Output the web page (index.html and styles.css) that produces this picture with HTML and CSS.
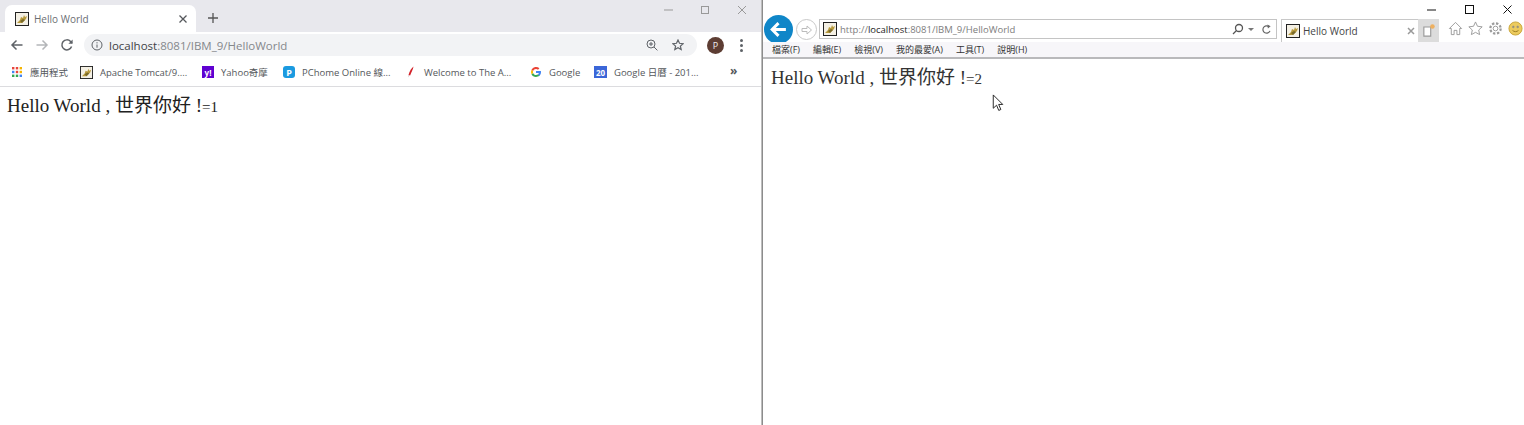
FILE: index.html
```html
<!DOCTYPE html>
<html lang="zh-Hant">
<head>
  <meta charset="UTF-8">
  <title>Hello World</title>
  <link rel="stylesheet" href="styles.css">
</head>
<body>
  <svg class="sprite" width="0" height="0">
    <symbol id="cat" viewBox="0 0 14 14">
      <rect x=".5" y=".5" width="13" height="13" fill="#f4f0e4" stroke="#222"/>
      <path d="M2 11 5 8l1-3 2 1 1-3 1 2 2-1-1 3-2 2-2 2H2z" fill="#b89a3c"/>
      <path d="M5 9l3-2 2 1-3 3z" fill="#7a6a2a"/>
    </symbol>
  </svg>

  <div class="screen">
    <!-- Chrome -->
    <section class="chrome">
      <div class="ch-titlebar">
        <div class="ch-tab">
          <svg class="fav"><use href="#cat"/></svg>
          <span class="ch-tab-title">Hello World</span>
          <svg class="ch-tab-x" viewBox="0 0 10 10"><path d="M1.5 1.5l7 7M8.5 1.5l-7 7"/></svg>
        </div>
        <svg class="ch-newtab" viewBox="0 0 12 12"><path d="M6 1v10M1 6h10"/></svg>
        <div class="ch-winbtns">
          <svg viewBox="0 0 10 10"><path d="M1 5h9"/></svg>
          <svg viewBox="0 0 10 10"><rect x="1.5" y="1.5" width="7" height="7"/></svg>
          <svg viewBox="0 0 10 10"><path d="M1 1l8 8M9 1l-8 8"/></svg>
        </div>
      </div>
      <div class="ch-toolbar">
        <svg class="ch-nav" viewBox="0 0 14 14"><path d="M12.5 7H2M6.5 2.5 2 7l4.5 4.5"/></svg>
        <svg class="ch-nav ch-nav-off" viewBox="0 0 14 14"><path d="M1.5 7H12M7.5 2.5 12 7l-4.5 4.5"/></svg>
        <svg class="ch-nav" viewBox="0 0 14 14"><path d="M11.6 8.6A5 5 0 1 1 10.6 3.5L12 5"/><path class="solid" d="M12.6 1.6v4.2H8.4z"/></svg>
        <div class="ch-omnibox">
          <svg class="ch-info" viewBox="0 0 12 12"><circle cx="6" cy="6" r="5"/><path d="M6 5.5v3.2M6 3.2v1.2"/></svg>
          <span class="ch-url"><b>localhost</b>:8081/IBM_9/HelloWorld</span>
          <svg class="ch-zoom" viewBox="0 0 12 12"><circle cx="5" cy="5" r="4"/><path d="M8 8l3.4 3.4M3 5h4M5 3v4"/></svg>
          <svg class="ch-star" viewBox="0 0 12 12"><path d="M6 1l1.5 3.3 3.6.4-2.7 2.4.8 3.5L6 8.8l-3.2 1.8.8-3.5L.9 4.7l3.6-.4z"/></svg>
        </div>
        <span class="ch-avatar">P</span>
        <span class="ch-menu"><i></i><i></i><i></i></span>
      </div>
      <div class="ch-bookmarks">
        <a class="bm bm-apps">
          <svg class="bm-ic" viewBox="0 0 12 12">
            <rect x="1" y="1" width="2.4" height="2.4" fill="#e8453c"/><rect x="4.8" y="1" width="2.4" height="2.4" fill="#e8453c"/><rect x="8.6" y="1" width="2.4" height="2.4" fill="#f4b400"/>
            <rect x="1" y="4.8" width="2.4" height="2.4" fill="#4285f4"/><rect x="4.8" y="4.8" width="2.4" height="2.4" fill="#e8453c"/><rect x="8.6" y="4.8" width="2.4" height="2.4" fill="#f4b400"/>
            <rect x="1" y="8.6" width="2.4" height="2.4" fill="#34a853"/><rect x="4.8" y="8.6" width="2.4" height="2.4" fill="#34a853"/><rect x="8.6" y="8.6" width="2.4" height="2.4" fill="#4285f4"/>
          </svg>應用程式</a>
        <a class="bm bm-tomcat"><svg class="bm-ic"><use href="#cat"/></svg>Apache Tomcat/9....</a>
        <a class="bm bm-yahoo"><span class="bm-ic ic-yahoo">y!</span>Yahoo奇摩</a>
        <a class="bm bm-pchome"><span class="bm-ic ic-pchome">P</span>PChome Online 線...</a>
        <a class="bm bm-apache">
          <svg class="bm-ic" viewBox="0 0 12 12"><path d="M8.5 .5C6.5 2 4.5 5 3.5 9l1.6.4C6.5 6 8 3.5 8.5 .5z" fill="#d22128"/><path d="M3.5 9 3 11.5l1.2-1.8z" fill="#c9b8c0"/></svg>Welcome to The A...</a>
        <a class="bm bm-google">
          <svg class="bm-ic" viewBox="0 0 12 12">
            <path d="M11 6.1c0-.4 0-.7-.1-1H6v2h2.8c-.1.7-.5 1.200-1 1.600l1.600 1.200c1-.9 1.600-2.200 1.600-3.800z" fill="#4285f4"/>
            <path d="M6 11c1.400 0 2.500-.5 3.400-1.200L7.800 8.600c-.5.300-1 .5-1.800.5-1.300 0-2.500-.9-2.900-2.100L1.500 8.200C2.300 9.900 4 11 6 11z" fill="#34a853"/>
            <path d="M3.100 7a3 3 0 0 1 0-2L1.500 3.800a5 5 0 0 0 0 4.400z" fill="#fbbc05"/>
            <path d="M6 2.900c.8 0 1.500.3 2 .8l1.400-1.400A5 5 0 0 0 1.500 3.800L3.100 5C3.500 3.800 4.700 2.900 6 2.900z" fill="#ea4335"/>
          </svg>Google</a>
        <a class="bm bm-cal"><span class="bm-ic ic-cal">20</span>Google 日曆 - 201...</a>
        <span class="bm-more">»</span>
      </div>
      <div class="ch-page">
        <p class="doc doc-ch">Hello World , 世界你好 !<small>=1</small></p>
      </div>
    </section>

    <!-- Internet Explorer -->
    <section class="ie">
      <div class="ie-winbtns">
        <svg viewBox="0 0 10 10"><path d="M0 5h9"/></svg>
        <svg viewBox="0 0 10 10"><rect x=".5" y=".5" width="8" height="8"/></svg>
        <svg viewBox="0 0 10 10"><path d="M.5 .5l8 8M8.500 .5l-8 8"/></svg>
      </div>
      <div class="ie-navbar">
        <span class="ie-back">
          <svg viewBox="0 0 18 18"><path d="M16 9H3M9 3 3 9l6 6"/></svg>
        </span>
        <span class="ie-forward">
          <svg viewBox="0 0 14 14"><path d="M2 5.500h5V3l4.500 4L7 11V8.500H2z"/></svg>
        </span>
        <div class="ie-address">
          <svg class="fav"><use href="#cat"/></svg>
          <span class="ie-url">http://<b>localhost</b>:8081/IBM_9/HelloWorld</span>
          <svg class="ie-search" viewBox="0 0 12 12"><circle cx="7" cy="5" r="3.500"/><path d="M4.500 7.500 1 11"/></svg>
          <span class="ie-drop"></span>
          <svg class="ie-refresh" viewBox="0 0 12 12"><path d="M9.800 7.500A4 4 0 1 1 8.500 2.800"/><path class="solid" d="M7 .5l3.500 2-3 2.500z"/></svg>
        </div>
        <div class="ie-tab">
          <svg class="fav"><use href="#cat"/></svg>
          <span class="ie-tab-title">Hello World</span>
          <svg class="ie-tab-x" viewBox="0 0 10 10"><path d="M2 2l6 6M8 2l-6 6"/></svg>
        </div>
        <span class="ie-newtab">
          <svg viewBox="0 0 14 14"><path d="M2.500 3.500h6v8h-6z" fill="#fff" stroke="#999"/><circle cx="10" cy="3" r="2" fill="#eeb060"/></svg>
        </span>
        <div class="ie-tools">
          <svg viewBox="0 0 16 16"><path d="M1.500 8 8 1.500 14.500 8H12.500v6.500H9.500V10h-3v4.500H3.500V8z"/></svg>
          <svg viewBox="0 0 16 16"><path d="M8 1l2.100 4.600 5 .6-3.700 3.400 1 4.900L8 12.100l-4.400 2.400 1-4.900L.9 6.200l5-.6z"/></svg>
          <svg viewBox="0 0 16 16"><circle cx="8" cy="8" r="2.500"/><circle cx="8" cy="8" r="5.500" stroke-dasharray="2.500 1.800" stroke-width="2.400"/></svg>
          <svg class="ie-smile" viewBox="0 0 16 16"><circle cx="8" cy="8" r="7" fill="#eccb5e" stroke="#c9a53a"/><circle cx="5.700" cy="6.300" r=".9" fill="#9a7b20"/><circle cx="10.300" cy="6.300" r=".9" fill="#9a7b20"/><path d="M4.800 10c1.800 1.800 4.600 1.800 6.400 0" stroke="#9a7b20"/></svg>
        </div>
      </div>
      <div class="ie-menubar">
        <span>檔案(F)</span>
        <span>編輯(E)</span>
        <span>檢視(V)</span>
        <span>我的最愛(A)</span>
        <span>工具(T)</span>
        <span>說明(H)</span>
      </div>
      <div class="ie-page">
        <p class="doc doc-ie">Hello World , 世界你好 !<small>=2</small></p>
      </div>
      <svg class="cursor" viewBox="0 0 12 20"><path d="M1 1v14l3.500-3.200 2.300 5.500 2.200-1-2.300-5.300H11z"/></svg>
    </section>
  </div>
</body>
</html>
```

FILE: styles.css
```css
* {
  box-sizing: border-box;
}
html, body {
  margin: 0;
  height: 100%;
  overflow: hidden;
  background-color: #fff;
}
body {
  font-family: "Open Sans", "Noto Sans CJK TC", sans-serif;
}
svg {
  display: block;
  flex: none;
}
.sprite {
  position: absolute;
}
.fav {
  width: 14px;
  height: 14px;
}
.screen {
  display: grid;
  grid-template-columns: 762px 1fr;
  height: 425px;
}

/* chrome */
.chrome {
  display: flex;
  flex-direction: column;
  border-right: 1px solid #bdbdbd;
}
.ch-titlebar {
  display: flex;
  align-items: flex-end;
  height: 32px;
  padding-left: 5px;
  background-color: #e8e8ed;
}
.ch-tab {
  display: flex;
  align-items: center;
  width: 191px;
  height: 27px;
  padding: 0 8px 0 10px;
  background-color: #fff;
  border-radius: 7px 7px 0 0;
}
.ch-tab-title {
  margin-left: 5px;
  font-size: 10px;
  color: #6b6e72;
}
.ch-tab-x {
  width: 10px;
  height: 10px;
  margin-left: auto;
  fill: none;
  stroke: #55585c;
  stroke-width: 1.3;
}
.ch-newtab {
  width: 12px;
  height: 12px;
  margin: 0 0 8px 11px;
  fill: none;
  stroke: #555;
  stroke-width: 1.300;
}
.ch-winbtns {
  display: flex;
  align-self: flex-start;
  gap: 27px;
  margin: 5px 14px 0 auto;
}
.ch-winbtns svg {
  width: 10px;
  height: 10px;
  fill: none;
  stroke: #999;
  stroke-width: 1;
}
.ch-toolbar {
  display: flex;
  align-items: center;
  height: 26px;
  padding: 0 12px 0 10px;
  background-color: #fff;
}
.ch-nav {
  width: 14px;
  height: 14px;
  margin-right: 11px;
  fill: none;
  stroke: #5f6368;
  stroke-width: 1.500;
}
.ch-nav-off {
  stroke: #b4b6b9;
}
.ch-nav .solid {
  fill: #5f6368;
  stroke: none;
}
.ch-omnibox {
  display: flex;
  align-items: center;
  width: 613px;
  height: 22px;
  margin: 0 0 0 -1px;
  padding: 0 13px 0 7px;
  background-color: #f2f3f5;
  border-radius: 11px;
}
.ch-info {
  width: 12px;
  height: 12px;
  fill: none;
  stroke: #5f6368;
}
.ch-url {
  margin-left: 6px;
  font-size: 11.500px;
  color: #85888c;
}
.ch-url b {
  font-weight: 400;
  color: #3f4246;
}
.ch-zoom, .ch-star {
  width: 12px;
  height: 12px;
  fill: none;
  stroke: #5f6368;
}
.ch-zoom {
  margin-left: auto;
}
.ch-star {
  margin-left: 14px;
  stroke-width: 1.200;
}
.ch-avatar {
  display: flex;
  align-items: center;
  justify-content: center;
  width: 17px;
  height: 17px;
  margin-left: 10px;
  border-radius: 50%;
  background-color: #5d3d33;
  color: #eee;
  font-size: 9px;
}
.ch-menu {
  display: flex;
  flex-direction: column;
  gap: 2px;
  margin-left: 16px;
}
.ch-menu i {
  width: 3px;
  height: 3px;
  border-radius: 50%;
  background-color: #5f6368;
}
.ch-bookmarks {
  display: flex;
  align-items: center;
  height: 29px;
  padding-left: 11px;
  background-color: #fff;
  border-bottom: 1px solid #dcdcdf;
}
.bm {
  display: flex;
  align-items: center;
  font-size: 9.500px;
  white-space: nowrap;
  color: #54575b;
}
.bm-ic {
  flex: none;
  width: 12px;
  height: 12px;
  margin-right: 7px;
}
svg.bm-ic use {
  width: 12px;
}
.bm-apps { width: 69px; }
.bm-tomcat { width: 122px; }
.bm-tomcat .bm-ic { width: 13px; height: 13px; }
.bm-yahoo { width: 81px; }
.bm-pchome { width: 122px; }
.bm-apache { width: 125px; }
.bm-google { width: 64px; }
.bm-cal { width: 136px; }
.ic-yahoo, .ic-pchome, .ic-cal {
  display: flex;
  align-items: center;
  justify-content: center;
  color: #fff;
  font-weight: 700;
}
.ic-yahoo {
  background-color: #5f01d1;
  font-size: 8px;
}
.ic-pchome {
  background-color: #1b9ae0;
  border-radius: 3px;
  font-size: 9px;
}
.ic-cal {
  width: 13px;
  background-color: #3b66d8;
  font-size: 8px;
}
.bm-more {
  margin-top: -3px;
  color: #55585c;
  font-size: 12px;
  font-weight: 700;
}
.ch-page {
  flex: 1;
  padding: 7px 7px 0;
}
.doc {
  margin: 0;
  font-family: "Liberation Serif", "Noto Sans CJK TC", serif;
  font-size: 19px;
  line-height: 24px;
  color: #222;
}
.doc small {
  font-size: 15px;
}

/* internet explorer */
.ie {
  position: relative;
  display: flex;
  flex-direction: column;
  border-left: 1px solid #8c8c8c;
}
.ie-winbtns {
  display: flex;
  justify-content: flex-end;
  gap: 28px;
  height: 15px;
  padding: 5px 11px 0 0;
}
.ie-winbtns svg {
  width: 10px;
  height: 10px;
  fill: none;
  stroke: #111;
}
.ie-navbar {
  display: flex;
  align-items: flex-start;
  height: 27px;
  padding-left: 1px;
}
.ie-back {
  display: flex;
  align-items: center;
  justify-content: center;
  width: 29px;
  height: 29px;
  border-radius: 50%;
  background-color: #0f86c8;
}
.ie-back svg {
  width: 19px;
  height: 19px;
  fill: none;
  stroke: #fff;
  stroke-width: 2.800;
}
.ie-forward {
  display: flex;
  align-items: center;
  justify-content: center;
  width: 21px;
  height: 21px;
  margin: 4px 2px 0 3px;
  border: 1px solid #c8c8c8;
  border-radius: 50%;
}
.ie-forward svg {
  width: 14px;
  height: 14px;
  fill: none;
  stroke: #bcbcbc;
}
.ie-address {
  display: flex;
  align-items: center;
  width: 458px;
  height: 20px;
  margin-top: 4px;
  padding: 0 4px 0 3px;
  border: 1px solid #c4c4c4;
}
.ie-url {
  margin-left: 3px;
  font-size: 9.500px;
  color: #7d7d7d;
}
.ie-url b {
  font-weight: 400;
  color: #1d1d1d;
}
.ie-search {
  width: 12px;
  height: 12px;
  margin-left: auto;
  fill: none;
  stroke: #555;
  stroke-width: 1.300;
}
.ie-drop {
  margin: 0 7px 0 4px;
  border-top: 3px solid #777;
  border-left: 3px solid transparent;
  border-right: 3px solid transparent;
}
.ie-refresh {
  width: 11px;
  height: 11px;
  fill: none;
  stroke: #666;
  stroke-width: 1.300;
}
.ie-refresh .solid {
  fill: #666;
  stroke: none;
}
.ie-tab {
  display: flex;
  align-items: center;
  width: 137px;
  height: 23px;
  margin: 4px 0 0 4px;
  padding: 0 2px 0 4px;
  border: 1px solid #c8c8c8;
  border-width: 1px 0 0 1px;
}
.ie-tab-title {
  margin-left: 3px;
  font-size: 10px;
  color: #444;
}
.ie-tab-x {
  width: 10px;
  height: 10px;
  margin-left: auto;
  fill: none;
  stroke: #9a9a9a;
  stroke-width: 1.500;
}
.ie-newtab {
  display: flex;
  align-items: center;
  justify-content: center;
  width: 21px;
  height: 23px;
  margin-top: 4px;
  background-color: #dcdcdc;
}
.ie-newtab svg {
  width: 16px;
  height: 16px;
}
.ie-tools {
  display: flex;
  gap: 5px;
  margin: 6px 0 0 9px;
}
.ie-tools svg {
  width: 15px;
  height: 15px;
  fill: none;
  stroke: #9a9a9a;
}
.ie-menubar {
  display: flex;
  align-items: center;
  gap: 13px;
  height: 17px;
  padding: 0 0 0 9px;
  background-color: #f7f6f9;
  border-bottom: 2px solid #b9b9bb;
  font-size: 9px;
  color: #333;
}
.ie-page {
  flex: 1;
  padding: 7px 8px 0;
}
.doc-ie {
  color: #333;
}
.cursor {
  position: absolute;
  left: 229px;
  top: 94px;
  width: 12px;
  height: 19px;
  fill: #fff;
  stroke: #222;
}
```
